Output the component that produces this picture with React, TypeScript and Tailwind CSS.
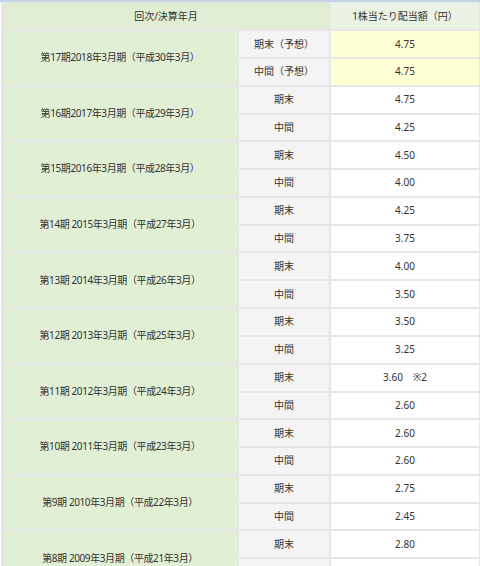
import React from 'react';

interface Row {
  label: string;
  value: string;
  forecast?: boolean;
}

interface Period {
  title: string;
  rows: Row[];
}

const periods: Period[] = [
  {
    title: '第17期2018年3月期（平成30年3月）',
    rows: [
      { label: '期末（予想）', value: '4.75', forecast: true },
      { label: '中間（予想）', value: '4.75', forecast: true },
    ],
  },
  {
    title: '第16期2017年3月期（平成29年3月）',
    rows: [
      { label: '期末', value: '4.75' },
      { label: '中間', value: '4.25' },
    ],
  },
  {
    title: '第15期2016年3月期（平成28年3月）',
    rows: [
      { label: '期末', value: '4.50' },
      { label: '中間', value: '4.00' },
    ],
  },
  {
    title: '第14期 2015年3月期（平成27年3月）',
    rows: [
      { label: '期末', value: '4.25' },
      { label: '中間', value: '3.75' },
    ],
  },
  {
    title: '第13期 2014年3月期（平成26年3月）',
    rows: [
      { label: '期末', value: '4.00' },
      { label: '中間', value: '3.50' },
    ],
  },
  {
    title: '第12期 2013年3月期（平成25年3月）',
    rows: [
      { label: '期末', value: '3.50' },
      { label: '中間', value: '3.25' },
    ],
  },
  {
    title: '第11期 2012年3月期（平成24年3月）',
    rows: [
      { label: '期末', value: '3.60\u3000※2' },
      { label: '中間', value: '2.60' },
    ],
  },
  {
    title: '第10期 2011年3月期（平成23年3月）',
    rows: [
      { label: '期末', value: '2.60' },
      { label: '中間', value: '2.60' },
    ],
  },
  {
    title: '第9期 2010年3月期（平成22年3月）',
    rows: [
      { label: '期末', value: '2.75' },
      { label: '中間', value: '2.45' },
    ],
  },
  {
    title: '第8期 2009年3月期（平成21年3月）',
    rows: [
      { label: '期末', value: '2.80' },
      { label: '中間', value: '2.40' },
    ],
  },
];

const cell = 'border-2 border-[#e6e6e6] text-center align-middle p-0';

const App: React.FC = () => {
  return (
    <div
      className="w-[480px] h-[566px] overflow-hidden bg-white border-t-2 border-[#c7d4e6] pl-[1px] text-[10px] text-[#333]"
      style={{ fontFamily: '"Noto Sans", "Noto Sans CJK JP", sans-serif' }}
    >
      <table className="w-[478px] border-collapse table-fixed -mt-[1px]">
        <colgroup>
          <col className="w-[236px]" />
          <col className="w-[92px]" />
          <col className="w-[150px]" />
        </colgroup>
        <thead>
          <tr className="h-[28px]">
            <th colSpan={2} className={`${cell} font-normal bg-[#e1eed4]`}>
              回次/決算年月
            </th>
            <th className={`${cell} font-normal bg-[#ebf3e5]`}>1株当たり配当額（円）</th>
          </tr>
        </thead>
        <tbody>
          {periods.map((p) =>
            p.rows.map((r, i) => (
              <tr key={p.title + i} className={i === 0 ? 'h-[28px]' : 'h-[27.6px]'}>
                {i === 0 && (
                  <td
                    rowSpan={p.rows.length}
                    className={`${cell} bg-[#e1efd4] tracking-[-0.4px]`}
                  >
                    {p.title}
                  </td>
                )}
                <td className={`${cell} bg-[#f4f4f4]`}>{r.label}</td>
                <td className={`${cell} ${r.forecast ? 'bg-[#ffffd6]' : 'bg-white'}`}>
                  {r.value}
                </td>
              </tr>
            ))
          )}
        </tbody>
      </table>
    </div>
  );
};

export default App;
